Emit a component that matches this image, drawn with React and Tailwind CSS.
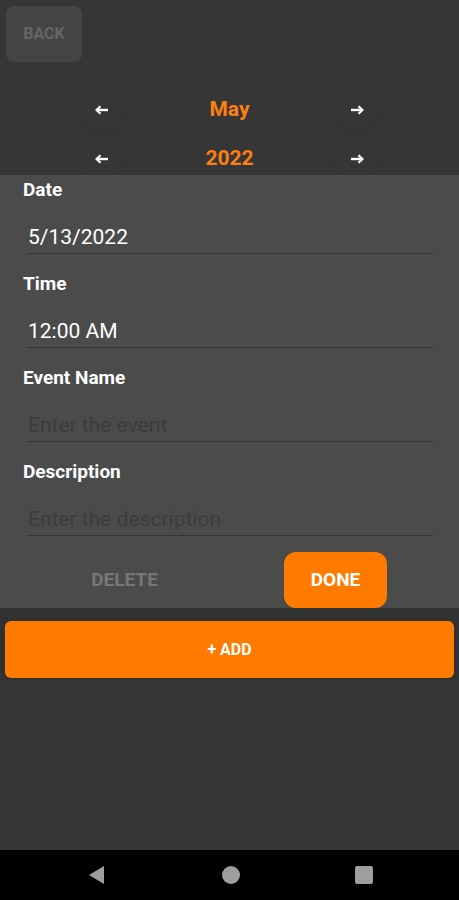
// Calendar – Add Event screen

function Arrow({ dir }) {
  return (
    <svg width="14" height="10" viewBox="0 0 14 10" className={dir === 'right' ? 'rotate-180' : ''}>
      <path d="M13 5 H3" stroke="white" strokeWidth="2.4" />
      <path d="M5.5 1.2 L1.5 5 L5.5 8.8" stroke="white" strokeWidth="2.2" fill="none" />
    </svg>
  );
}

function Stepper({ value, className }) {
  return (
    <div className={`flex items-center justify-between w-[300px] mx-auto ${className}`}>
      <button className="w-[44px] h-[40px] rounded-full flex items-center justify-center shadow-[0_2px_5px_rgba(0,0,0,0.06)]">
        <Arrow dir="left" />
      </button>
      <span className="text-[#ff7f0f] text-[21px] font-bold">{value}</span>
      <button className="w-[44px] h-[40px] rounded-full flex items-center justify-center shadow-[0_2px_5px_rgba(0,0,0,0.06)]">
        <Arrow dir="right" />
      </button>
    </div>
  );
}

function Field({ label, value, placeholder }) {
  return (
    <div className="flex flex-col">
      <label className="pl-[23px] text-white text-[19px] font-bold leading-[20px] h-[20px]">{label}</label>
      <div className="mt-[26px] ml-[27px] mr-[26px] border-b border-[#363636] h-[28px] flex items-start">
        {value ? (
          <span className="pl-[1px] text-white text-[21px] leading-[22px]">{value}</span>
        ) : (
          <span className="pl-[1px] text-[#3c3c3c] text-[21px] leading-[22px]">{placeholder}</span>
        )}
      </div>
    </div>
  );
}

export default function App() {
  return (
    <div className="w-[459px] h-[900px] bg-[#363636] flex flex-col font-['Roboto',sans-serif]">
      <div className="pt-[6px] pl-[6px]">
        <button className="w-[76px] h-[56px] rounded-[8px] bg-[#444444] text-[#666666] text-[16px] font-bold">BACK</button>
      </div>

      <Stepper value="May" className="mt-[28px]" />
      <Stepper value="2022" className="mt-[9px]" />

      {/* form panel */}
      <div className="mt-[-4px] bg-[#4b4b4b] pt-[5px] flex flex-col gap-[20px] relative">
        <Field label="Date" value="5/13/2022" />
        <Field label="Time" value="12:00 AM" />
        <Field label="Event Name" placeholder="Enter the event" />
        <Field label="Description" placeholder="Enter the description" />
        <div className="-mt-[4px] flex items-center h-[56px]">
          <div className="w-[249px] flex justify-center">
            <span className="text-[#777777] text-[19px] font-bold">DELETE</span>
          </div>
          <button className="ml-[35px] w-[103px] h-[56px] rounded-[12px] bg-[#ff7b00] text-white text-[19px] font-bold">DONE</button>
        </div>
      </div>

      <div className="px-[5px] bg-[#303232] pt-[13px] pb-[3px]">
        <button className="w-full h-[57px] rounded-[6px] bg-[#ff7b00] text-white text-[16px] font-bold">+ ADD</button>
      </div>

      <div className="flex-1" />

      {/* android nav bar */}
      <div className="h-[50px] bg-black flex items-center pl-[87px]">
        <svg width="18" height="20" viewBox="0 0 18 20"><path d="M17 1 L2 10 L17 19 Z" fill="#9e9e9e" /></svg>
        <div className="ml-[117px] w-[18px] h-[18px] rounded-full bg-[#9e9e9e]" />
        <div className="ml-[115px] w-[18px] h-[18px] rounded-[2px] bg-[#9e9e9e]" />
      </div>
    </div>
  );
}
